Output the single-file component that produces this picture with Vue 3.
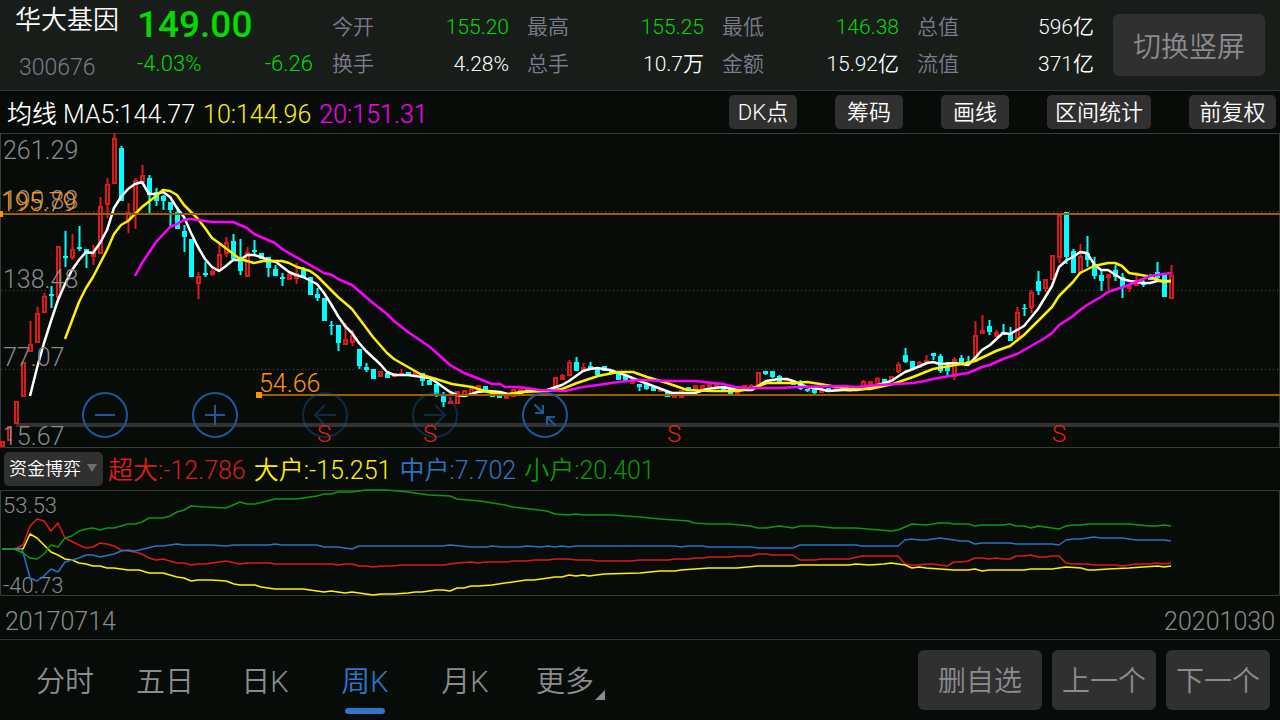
<script setup>
import { ref } from 'vue'

const stats = [
  { label: '今开', value: '155.20', down: true },
  { label: '最高', value: '155.25', down: true },
  { label: '最低', value: '146.38', down: true },
  { label: '总值', value: '596亿' },
  { label: '换手', value: '4.28%' },
  { label: '总手', value: '10.7万' },
  { label: '金额', value: '15.92亿' },
  { label: '流值', value: '371亿' },
]
const tools = ['DK点', '筹码', '画线', '区间统计', '前复权']
const tabs = ['分时', '五日', '日K', '周K', '月K', '更多']
const activeTab = ref('周K')
const indicator = ref('资金博弈')

const priceLabels = [
  { y: 159, text: '261.29' },
  { y: 209, text: '199.88' },
  { y: 288, text: '138.48' },
  { y: 366, text: '77.07' },
  { y: 445, text: '15.67' },
]
const sellMarks = [324, 430, 674, 1059]

// One candle per week: direction, high, body top, body bottom, low
const weeks = `r 441 441 447 447;r 426 426 441 441;r 401 401 424 424;r 362 362 397 397;r 321 344 352 352;r 307 313 343 343;r 293 296 313 313;c 286 294 296 308;r 246 246 298 298;c 231 256 258 267;r 234 249 258 260;c 226 247 249 251;c 249 249 254 268;r 245 252 257 265;r 197 206 254 254;r 178 184 205 218;r 133 138 184 184;c 146 148 201 201;r 203 212 221 233;r 178 180 214 229;r 165 175 183 183;c 175 178 195 215;c 188 192 201 206;c 195 196 201 210;c 202 202 210 226;c 207 212 229 229;c 225 231 237 252;c 239 239 277 277;r 272 276 284 299;c 262 273 275 277;r 267 271 275 276;r 243 254 271 271;r 237 242 254 257;c 234 241 259 259;c 239 258 271 275;r 247 252 277 277;c 240 250 252 255;c 253 253 259 259;c 257 257 268 277;c 265 269 276 276;c 273 277 279 286;r 272 274 280 280;r 263 273 279 284;c 267 270 278 278;c 277 277 295 295;c 288 294 298 301;c 298 298 321 321;c 321 325 326 335;c 325 325 343 351;r 323 339 345 345;r 330 335 343 346;c 349 349 366 369;c 363 367 370 372;c 369 369 379 379;r 371 371 377 377;c 371 373 378 378;r 373 373 377 377;r 369 373 376 376;c 372 372 376 376;r 371 371 375 375;c 373 373 381 386;c 380 380 385 385;c 384 384 395 397;c 392 396 402 407;r 397 401 404 404;r 391 391 404 404;r 390 390 397 397;r 388 388 394 394;r 385 385 391 391;c 386 386 391 391;c 391 391 397 397;c 395 395 398 398;r 395 395 399 399;r 389 389 397 397;r 389 389 394 394;r 387 387 391 391;c 390 390 392 392;r 389 389 392 392;c 389 389 391 391;r 377 377 387 387;r 374 375 380 380;r 360 362 376 376;c 357 362 371 371;r 363 367 371 371;c 362 366 369 369;c 368 368 375 375;c 366 366 371 371;c 370 370 373 373;c 373 373 380 380;c 376 376 381 381;r 379 379 384 384;c 384 384 387 391;c 384 384 389 390;c 387 387 391 391;r 388 388 392 392;c 391 391 397 397;r 393 393 398 398;r 390 390 398 398;c 387 387 390 390;r 385 385 389 389;r 385 385 389 389;r 383 383 387 387;r 383 383 388 388;c 386 386 391 391;c 389 389 395 395;r 391 391 395 395;r 385 385 390 390;r 384 385 388 388;r 372 372 387 387;c 371 371 374 375;c 371 371 377 378;c 375 376 382 383;r 379 379 381 381;c 382 382 385 385;c 380 382 389 390;c 389 389 391 392;c 387 387 393 394;r 390 390 393 393;c 388 388 392 392;r 388 388 391 391;c 389 389 391 391;r 390 390 392 392;r 387 387 390 390;r 380 381 387 387;r 381 381 385 385;r 377 378 385 385;c 379 379 383 383;r 376 376 382 382;r 362 364 372 373;c 348 355 362 363;c 361 361 369 369;r 361 362 368 368;r 355 360 363 364;c 353 353 356 360;c 354 356 371 373;c 362 367 371 376;r 357 359 377 380;c 355 358 363 363;c 356 361 363 363;r 321 335 362 362;r 315 330 334 334;c 320 326 332 335;r 330 332 337 337;c 324 332 335 335;c 327 333 341 341;r 307 312 339 339;c 304 308 309 316;r 290 292 308 313;c 271 281 291 295;r 279 279 289 292;r 255 255 280 280;r 215 215 258 263;c 212 212 257 264;c 249 251 273 273;r 244 256 273 273;c 236 253 260 267;c 257 264 276 279;c 271 275 281 291;r 274 274 278 290;c 265 270 277 281;c 273 277 287 298;r 283 286 289 292;r 272 280 286 286;c 280 282 285 287;c 274 276 280 280;c 262 272 278 280;c 275 275 297 297;r 265 275 299 299`
const candles = weeks.split(';').map((week, i) => {
  const [kind, ...levels] = week.split(' ')
  const [high, top, bottom, low] = levels.map(Number)
  const x = 2 + 7 * i
  return { x, high, top, bottom, low, up: kind === 'r', tall: bottom - top > 5 }
})

const averages = {
  ma20: '135,276 142,263 156,242 170,227 177,224 184,220 191,219 212,222 233,222 247,228 254,234 268,240 275,243 282,249 324,273 332,275 338,279 352,285 373,303 387,314 394,321 408,332 430,347 450,365 464,373 477,378 492,384 500,384 505,387 518,387 540,390 565,391 583,387 598,385 618,382 640,380 670,381 695,381 723,384 735,387 750,388 780,388 797,387 843,386 857,387 878,385 913,383 925,381 933,379 955,375 968,373 982,367 990,365 1003,359 1017,354 1031,346 1045,338 1052,333 1059,325 1067,320 1073,316 1080,310 1087,305 1101,297 1108,292 1129,285 1150,276 1171,273',
  ma10: '65,339 79,302 86,288 93,277 107,250 114,234 121,225 128,221 142,207 156,196 163,190 170,191 177,195 184,205 198,219 205,228 212,238 219,243 240,259 254,263 263,261 282,261 289,263 297,267 310,271 317,276 338,297 352,309 373,337 387,353 394,359 408,367 422,375 436,379 452,384 472,387 488,392 505,395 520,392 547,391 562,389 577,383 598,376 618,372 633,372 647,377 667,383 687,390 713,391 738,391 753,388 767,383 793,383 807,382 820,384 837,387 853,389 870,389 893,384 913,377 933,369 955,365 968,363 975,361 996,351 1010,346 1024,335 1038,321 1052,307 1059,296 1073,282 1080,273 1094,266 1108,263 1115,263 1122,266 1129,273 1147,276 1164,282 1171,281',
  ma5: '30,396 37,368 44,343 51,321 58,300 65,284 72,270 79,260 86,252 93,253 100,243 107,230 114,208 121,197 128,189 135,184 142,182 149,194 156,194 163,192 170,197 177,208 184,217 191,233 198,247 205,259 212,267 219,271 226,266 233,260 240,260 247,255 254,255 261,257 268,260 276,262 289,272 296,275 303,277 317,284 324,293 331,304 338,316 345,326 352,333 359,343 366,351 380,364 387,372 394,375 408,375 422,377 429,378 436,382 450,392 457,395 464,396 472,394 477,392 488,391 500,392 508,394 520,393 527,391 547,390 562,385 569,381 583,371 590,369 597,368 610,370 625,375 640,381 653,386 672,393 695,393 707,389 723,387 738,390 752,390 758,386 766,381 779,379 787,379 793,381 807,387 820,389 828,391 843,390 857,390 870,388 878,385 891,381 905,372 913,369 927,363 933,362 940,364 955,363 968,365 975,358 982,350 990,345 1003,333 1010,334 1024,326 1038,309 1052,286 1059,267 1067,260 1073,257 1080,252 1087,253 1094,264 1101,270 1108,270 1122,279 1130,281 1143,283 1150,283 1157,281 1164,281 1171,281',
}

const flows = {
  large: '2,549 23,549 30,534 37,538 51,552 58,555 65,559 72,560 79,563 86,564 93,566 100,566 107,568 114,568 128,570 139,570 149,573 163,573 177,577 184,578 191,581 198,580 212,580 226,581 234,584 240,585 255,585 261,587 275,589 303,589 324,592 331,591 345,593 352,592 373,595 381,594 394,594 408,593 415,592 422,592 436,590 443,590 450,591 457,588 464,588 471,586 479,586 492,585 526,580 534,580 555,577 562,577 569,575 576,576 583,575 589,576 604,574 640,573 660,571 675,571 681,570 709,568 737,568 758,566 793,566 800,565 849,565 856,564 869,565 884,564 891,563 905,565 912,568 919,567 926,568 940,569 954,570 968,570 975,569 982,571 989,570 1024,570 1031,569 1052,569 1066,567 1081,568 1088,570 1094,570 1108,569 1129,568 1143,567 1158,566 1164,567 1171,566',
  huge: '2,549 13,549 17,548 23,545 30,526 37,519 44,521 51,531 58,523 65,538 79,545 86,548 93,547 100,543 107,544 114,546 121,550 128,551 135,552 142,554 149,558 156,560 163,559 177,563 184,563 191,565 198,564 205,564 226,561 240,564 247,563 269,563 275,564 331,564 338,565 345,564 352,564 359,566 366,566 373,567 381,566 393,566 401,565 444,565 457,563 471,562 478,563 485,562 507,562 513,561 527,561 534,560 548,560 555,559 569,559 576,560 590,560 597,561 631,561 640,560 668,560 675,559 688,559 695,558 702,558 709,557 730,557 737,556 751,556 758,554 766,554 772,555 793,555 800,560 814,560 821,559 849,559 862,556 898,556 905,564 912,565 919,565 926,564 933,564 947,566 954,562 961,562 968,561 975,558 982,558 989,559 996,558 1003,559 1010,559 1016,556 1024,556 1031,555 1038,557 1045,557 1052,556 1059,556 1066,563 1073,564 1088,564 1094,565 1115,565 1122,566 1136,564 1150,564 1156,563 1164,564 1171,563',
  middle: '2,549 21,549 23,552 30,578 37,581 44,576 51,569 58,572 65,562 79,558 86,555 93,555 100,557 114,554 121,551 128,550 135,551 156,546 163,546 177,544 184,545 212,545 226,546 234,545 269,545 275,544 282,545 317,545 324,547 338,547 352,549 359,546 442,546 450,545 471,547 486,547 492,546 501,547 520,547 527,546 541,547 548,546 555,547 562,546 569,547 576,546 675,546 681,547 688,546 702,546 709,547 751,547 758,548 793,548 800,545 856,545 862,546 898,546 905,540 912,539 919,540 926,540 940,538 961,541 968,541 975,544 982,543 1010,543 1016,544 1052,544 1059,545 1066,540 1073,539 1081,539 1094,537 1101,538 1122,538 1136,540 1164,540 1171,541',
  small: '2,549 14,549 23,553 30,558 37,559 44,554 51,545 58,547 65,538 72,536 79,531 86,529 93,528 100,530 107,528 114,528 128,524 135,524 142,522 149,518 163,518 170,516 177,512 184,510 191,506 205,507 226,508 240,502 247,504 255,504 275,499 296,499 317,496 324,494 331,494 338,492 352,492 366,490 387,490 408,492 429,495 450,496 457,499 480,501 505,505 513,507 547,511 555,514 568,515 576,514 583,515 612,515 640,517 660,519 689,521 694,523 709,524 730,524 750,526 758,528 766,528 779,526 793,528 800,526 814,526 834,528 856,528 891,531 898,530 912,524 926,525 940,523 948,523 954,524 968,524 975,526 982,525 1003,525 1010,524 1016,526 1024,526 1031,528 1038,526 1059,529 1066,526 1073,525 1081,525 1088,524 1129,524 1150,526 1156,526 1164,525 1171,526',
}
</script>

<template>
  <main class="screen">
    <header class="quote">
      <div class="identity">
        <h1>华大基因</h1>
        <span class="code">300676</span>
      </div>
      <div class="last">
        <strong>149.00</strong>
        <div class="change"><span>-4.03%</span><span>-6.26</span></div>
      </div>
      <dl class="stats">
        <div v-for="s in stats" :key="s.label" class="stat">
          <dt>{{ s.label }}</dt>
          <dd :class="{ down: s.down }">{{ s.value }}</dd>
        </div>
      </dl>
      <button class="rotate" type="button">切换竖屏</button>
    </header>

    <section class="averages">
      <span>均线 MA5:144.77</span>
      <span class="yellow">10:144.96</span>
      <span class="magenta">20:151.31</span>
      <div class="tools">
        <button v-for="t in tools" :key="t" type="button" :class="{ wide: t === '前复权' }">{{ t }}</button>
      </div>
    </section>

    <section class="chart">
      <svg viewBox="0 133 1280 315" role="img" aria-label="周K线图">
        <g class="frame">
          <path d="M0 133.5H1280M0 447.5H1280M0.5 133V448M1279.5 133V448" />
          <path class="dots" d="M1 211.5H1280M1 290.5H1280M1 369.5H1280" />
        </g>
        <rect class="scroll" x="16" y="423" width="1264" height="4" />
        <g v-for="c in candles" :key="c.x" :class="c.up ? 'up' : 'fall'">
          <path v-if="c.up && c.tall" class="wick" :d="`M${c.x + 0.5} ${c.high}V${c.top}M${c.x + 0.5} ${c.bottom}V${c.low}`" />
          <path v-else class="wick" :d="`M${c.x + 0.5} ${c.high}V${c.low}`" />
          <rect v-if="c.up && c.tall" class="hollow" :x="c.x - 1" :y="c.top + 1" width="3" :height="c.bottom - c.top - 2" />
          <rect v-else class="solid" :x="c.x - 2" :y="c.top" width="5" :height="c.bottom - c.top" />
        </g>
        <g class="lines">
          <polyline class="l-white" :points="averages.ma5" />
          <polyline class="l-yellow" :points="averages.ma10" />
          <polyline class="l-magenta" :points="averages.ma20" />
        </g>
        <g class="prices">
          <text v-for="p in priceLabels" :key="p.text" x="3" :y="p.y">{{ p.text }}</text>
        </g>
        <g class="levels">
          <path d="M0 214H1280M259 395H1280" />
          <rect x="0" y="211" width="3" height="6" />
          <rect x="256" y="392" width="6" height="6" />
          <text x="1" y="211">195.79</text>
          <text x="259" y="392">54.66</text>
        </g>
        <g class="sells">
          <text v-for="x in sellMarks" :key="x" :x="x" y="442">S</text>
        </g>
      </svg>
      <div class="controls">
        <button type="button" aria-label="缩小"><svg viewBox="0 0 46 46"><circle cx="23" cy="23" r="22" /><path d="M13 23H33" /></svg></button>
        <button type="button" aria-label="放大"><svg viewBox="0 0 46 46"><circle cx="23" cy="23" r="22" /><path d="M13 23H33M23 13V33" /></svg></button>
        <button type="button" class="dim" aria-label="左移"><svg viewBox="0 0 46 46"><circle cx="23" cy="23" r="22" /><path d="M34 23H13M23 13L13 23L23 33" /></svg></button>
        <button type="button" class="dim" aria-label="右移"><svg viewBox="0 0 46 46"><circle cx="23" cy="23" r="22" /><path d="M12 23H33M23 13L33 23L23 33" /></svg></button>
        <button type="button" aria-label="收起"><svg viewBox="0 0 46 46"><circle cx="23" cy="23" r="22" /><path d="M12.500 12.500L21 21M13 21H21V13M33.500 33.500L25 25M25 33V25H33" /></svg></button>
      </div>
    </section>

    <section class="legend">
      <label class="picker">
        <select v-model="indicator" aria-label="指标">
          <option>资金博弈</option>
        </select>
        <svg viewBox="0 0 10 8"><path d="M0 0H10L5 8Z" /></svg>
      </label>
      <span class="red">超大:-12.786</span>
      <span class="yellow">大户:-15.251</span>
      <span class="blue">中户:7.702</span>
      <span class="green">小户:20.401</span>
    </section>

    <section class="chart">
      <svg viewBox="0 490 1280 106" role="img" aria-label="资金博弈图">
        <path class="box" d="M0.500 490.500H1279.500V595.500H0.500Z" />
        <g class="prices small">
          <text x="3" y="513">53.53</text>
          <text x="3" y="593">-40.73</text>
        </g>
        <g class="flows">
          <polyline class="l-red" :points="flows.huge" />
          <polyline class="l-yellow" :points="flows.large" />
          <polyline class="l-blue" :points="flows.middle" />
          <polyline class="l-green" :points="flows.small" />
        </g>
      </svg>
    </section>

    <div class="dates"><time>20170714</time><time>20201030</time></div>

    <footer>
      <nav>
        <button v-for="t in tabs" :key="t" type="button" :class="{ active: t === activeTab, more: t === '更多' }" @click="activeTab = t">{{ t }}</button>
      </nav>
      <div class="actions">
        <button type="button" class="remove">删自选</button>
        <button type="button">上一个</button>
        <button type="button">下一个</button>
      </div>
    </footer>
  </main>
</template>

<style>
body { background: #070c08; }
</style>

<style scoped>
.screen {
  min-height: 100vh;
  display: flex;
  flex-direction: column;
  background: #070c08;
  color: #fff;
  font: 350 25px/1 Roboto, "Noto Sans CJK SC", sans-serif;
  white-space: nowrap;
}
* { box-sizing: border-box; }
button, select { font: inherit; border: 0; padding: 0; margin: 0; color: inherit; background: none; }
h1, dl, dd { margin: 0; font-weight: inherit; }

.quote {
  display: flex;
  align-items: center;
  height: 91px;
  padding: 0 15px;
  background: #191d1a;
  border-bottom: 1px solid #333735;
}
.identity { width: 122px; height: 100%; display: flex; flex-direction: column; gap: 20px; padding-top: 6px; }
h1 { font-size: 26px; line-height: 28px; }
.code { font-size: 23px; line-height: 28px; color: #7c7b8c; padding-left: 4px; }
.last { width: 176px; height: 100%; padding-top: 7px; color: #00dc00; display: flex; flex-direction: column; gap: 3px; }
.last strong { font-size: 37px; line-height: 36px; font-weight: 500; }
.change { display: flex; justify-content: space-between; font-size: 22px; line-height: 36px; }
.stats { flex: 1; display: grid; grid-template-columns: repeat(4, 1fr); column-gap: 18px; margin: 2px 19px 0; font-size: 21px; line-height: 37px; }
.stat { display: flex; justify-content: space-between; }
dt { color: #7c7b8c; }
dd.down { color: #00dc00; }
.rotate { width: 152px; height: 62px; padding-top: 5px; border-radius: 6px; background: #303030; color: #8c8b90; font-size: 28px; }

.averages { display: flex; align-items: center; gap: 8px; height: 42px; padding: 5px 4px 0 7px; }
.tools { display: flex; gap: 38px; margin-left: auto; margin-top: -5px; }
.tools button { min-width: 68px; height: 34px; padding: 2px 8px 0; border-radius: 5px; background: #303030; font-size: 22px; }
.tools .wide { min-width: 87px; }
.yellow { color: #fff000; }
.magenta { color: #f0f; }
.red { color: #d91c18; }
.blue { color: #2e75c8; }
.green { color: #0a990a; }

.chart { position: relative; }
.chart > svg { display: block; width: 100%; height: auto; overflow: visible; }
.frame path, .box { fill: none; stroke: #3a3e3b; }
.frame .dots { stroke: #4b4e4c; stroke-dasharray: 1 3; }
.scroll { fill: #333; }
.prices { fill: #8a8a8a; font-size: 25px; }
.prices.small { font-size: 22px; }
.wick { stroke-width: 2; }
.up .wick, .hollow { stroke: #dd1a18; }
.hollow { fill: none; stroke-width: 2; }
.up .solid { fill: #dd1a18; }
.fall .wick { stroke: #0ff; }
.fall .solid { fill: #0ff; }
.levels path { stroke: #9c5e00; stroke-width: 2; }
.levels { fill: #ff9200; font-size: 25px; }
.lines polyline { fill: none; stroke-width: 2.500; stroke-linejoin: round; }
.flows polyline { fill: none; stroke-width: 1.500; stroke-linejoin: round; }
.lines .l-white { stroke: #fff; }
.l-yellow { stroke: #fff000; }
.lines .l-magenta { stroke: #f0f; }
.l-red { stroke: #dd1a18; }
.l-blue { stroke: #2a70c8; }
.l-green { stroke: #0a990a; }
.sells { fill: #e61e1a; font-size: 24px; text-anchor: middle; }
.controls { position: absolute; left: 82px; bottom: 10px; display: flex; gap: 64px; }
.controls button { width: 46px; height: 46px; }
.controls svg { display: block; fill: none; stroke: #19599c; stroke-width: 2; }
.controls .dim { opacity: 0.4; }

.legend { display: flex; align-items: center; gap: 8px; height: 42px; padding: 0 4px; }
.legend span { padding-top: 3px; }
.picker { position: relative; margin-right: -3px; }
.picker select { appearance: none; display: block; width: 99px; height: 34px; padding: 0 5px; border-radius: 5px; background: #303030; font-size: 18px; }
.picker svg { position: absolute; right: 6px; top: 12px; width: 10px; height: 8px; fill: #6e6e6e; }

.dates { display: flex; justify-content: space-between; align-items: center; height: 44px; padding: 7px 5px 0; color: #8a8a8a; border-bottom: 1px solid #333735; }

footer { flex: 1; display: flex; align-items: center; justify-content: space-between; min-height: 80px; padding: 0 10px 0 15px; color: #8c8b90; }
nav { display: flex; align-self: stretch; }
nav button { position: relative; width: 100px; padding-top: 5px; font-size: 29px; }
nav .active { color: #2e75c8; }
nav .active::after { content: ""; position: absolute; left: 30px; bottom: 6px; width: 40px; height: 6px; border-radius: 3px; background: #2e75c8; }
nav .more::after { content: ""; position: absolute; right: 10px; bottom: 20px; border-left: 10px solid transparent; border-bottom: 10px solid #8c8b90; }
.actions { display: flex; gap: 10px; }
.actions button { width: 104px; height: 60px; padding-top: 4px; border-radius: 6px; background: #303030; font-size: 28px; }
.actions .remove { width: 124px; }
</style>
